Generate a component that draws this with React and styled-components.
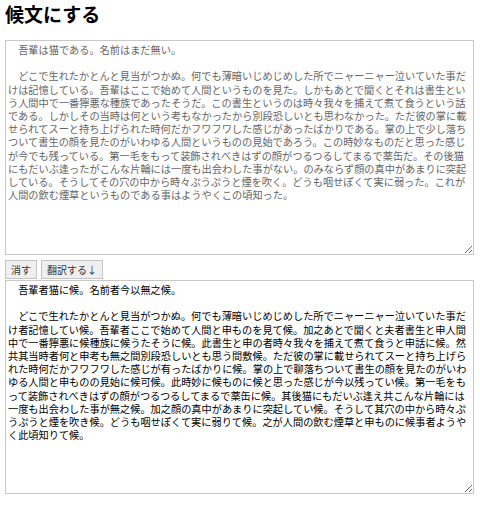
import React, { useState } from "react";
import styled, { createGlobalStyle } from "styled-components";

const GlobalStyle = createGlobalStyle`
  html, body {
    margin: 0;
    padding: 0;
    background: #fff;
  }
  body {
    font-family: "Noto Sans CJK JP", "Liberation Sans", sans-serif;
  }
`;

const Page = styled.div`
  padding: 0 5px;
  display: flex;
  flex-direction: column;
`;

const Title = styled.h1`
  margin: 0 0 12px;
  font-size: 19px;
  line-height: 28px;
  font-weight: 700;
  color: #000;
`;

const TextBox = styled.textarea`
  box-sizing: border-box;
  display: block;
  width: 469px;
  height: ${(props) => props.$height}px;
  margin: 0;
  padding: 2px;
  border: 1px solid #c8c8c8;
  border-radius: 0;
  font-family: "Noto Sans CJK JP", sans-serif;
  font-size: 10.2px;
  line-height: 13.2px;
  color: #000;
  background: #fff;
  outline: none;
  &::placeholder {
    color: #666;
    opacity: 1;
  }
`;

const ButtonRow = styled.div`
  display: flex;
  gap: 4px;
  margin: 5px 0 1px;
`;

const Button = styled.button`
  height: 19px;
  padding: 0 5px;
  border: 1px solid #c4c4c4;
  border-radius: 0;
  background: #efefef;
  color: #333;
  font-family: "Noto Sans CJK JP", sans-serif;
  font-size: 10px;
  line-height: 17px;
  cursor: pointer;
`;

const sample =
  "　吾輩は猫である。名前はまだ無い。\n\n" +
  "　どこで生れたかとんと見当がつかぬ。何でも薄暗いじめじめした所でニャーニャー泣いていた事だけは記憶している。吾輩はここで始めて人間というものを見た。しかもあとで聞くとそれは書生という人間中で一番獰悪な種族であったそうだ。この書生というのは時々我々を捕えて煮て食うという話である。しかしその当時は何という考もなかったから別段恐しいとも思わなかった。ただ彼の掌に載せられてスーと持ち上げられた時何だかフワフワした感じがあったばかりである。掌の上で少し落ちついて書生の顔を見たのがいわゆる人間というものの見始であろう。この時妙なものだと思った感じが今でも残っている。第一毛をもって装飾されべきはずの顔がつるつるしてまるで薬缶だ。その後猫にもだいぶ逢ったがこんな片輪には一度も出会わした事がない。のみならず顔の真中があまりに突起している。そうしてその穴の中から時々ぷうぷうと煙を吹く。どうも咽せぽくて実に弱った。これが人間の飲む煙草というものである事はようやくこの頃知った。";

const translated =
  "　吾輩者猫に候。名前者今以無之候。\n\n" +
  "　どこで生れたかとんと見当がつかぬ。何でも薄暗いじめじめした所でニャーニャー泣いていた事だけ者記憶してい候。吾輩者ここで始めて人間と申ものを見て候。加之あとで聞くと夫者書生と申人間中で一番獰悪に候種族に候うたそうに候。此書生と申の者時々我々を捕えて煮て食うと申話に候。然共其当時者何と申考も無之間別段恐しいとも思う間敷候。ただ彼の掌に載せられてスーと持ち上げられた時何だかフワフワした感じが有ったばかりに候。掌の上で聊落ちついて書生の顔を見たのがいわゆる人間と申ものの見始に候可候。此時妙に候ものに候と思った感じが今以残ってい候。第一毛をもって装飾されべきはずの顔がつるつるしてまるで薬缶に候。其後猫にもだいぶ逢え共こんな片輪には一度も出会わした事が無之候。加之顔の真中があまりに突起してい候。そうして其穴の中から時々ぷうぷうと煙を吹き候。どうも咽せぽくて実に弱りて候。之が人間の飲む煙草と申ものに候事者ようやく此頃知りて候。";

// ざっくりした置き換え表
const rules = [
  ["である。", "に候。"],
  ["は", "者"],
  ["いう", "申"],
  ["まだ", "今以"],
  ["無い", "無之候"],
];

const toSorobun = (text) =>
  rules.reduce((acc, [from, to]) => acc.split(from).join(to), text);

const App = () => {
  const [input, setInput] = useState("");
  const [output, setOutput] = useState(translated);

  const handleTranslate = () => {
    if (!input) {
      setOutput(translated);
      return;
    }
    setOutput(toSorobun(input));
  };

  return (
    <>
      <GlobalStyle />
      <Page>
        <Title>候文にする</Title>
        <TextBox
          $height={215}
          placeholder={sample}
          value={input}
          onChange={(e) => setInput(e.target.value)}
        />
        <ButtonRow>
          <Button onClick={() => setInput("")}>消す</Button>
          <Button onClick={handleTranslate}>翻訳する↓</Button>
        </ButtonRow>
        <TextBox
          $height={214}
          value={output}
          onChange={(e) => setOutput(e.target.value)}
        />
      </Page>
    </>
  );
};

export default App;
